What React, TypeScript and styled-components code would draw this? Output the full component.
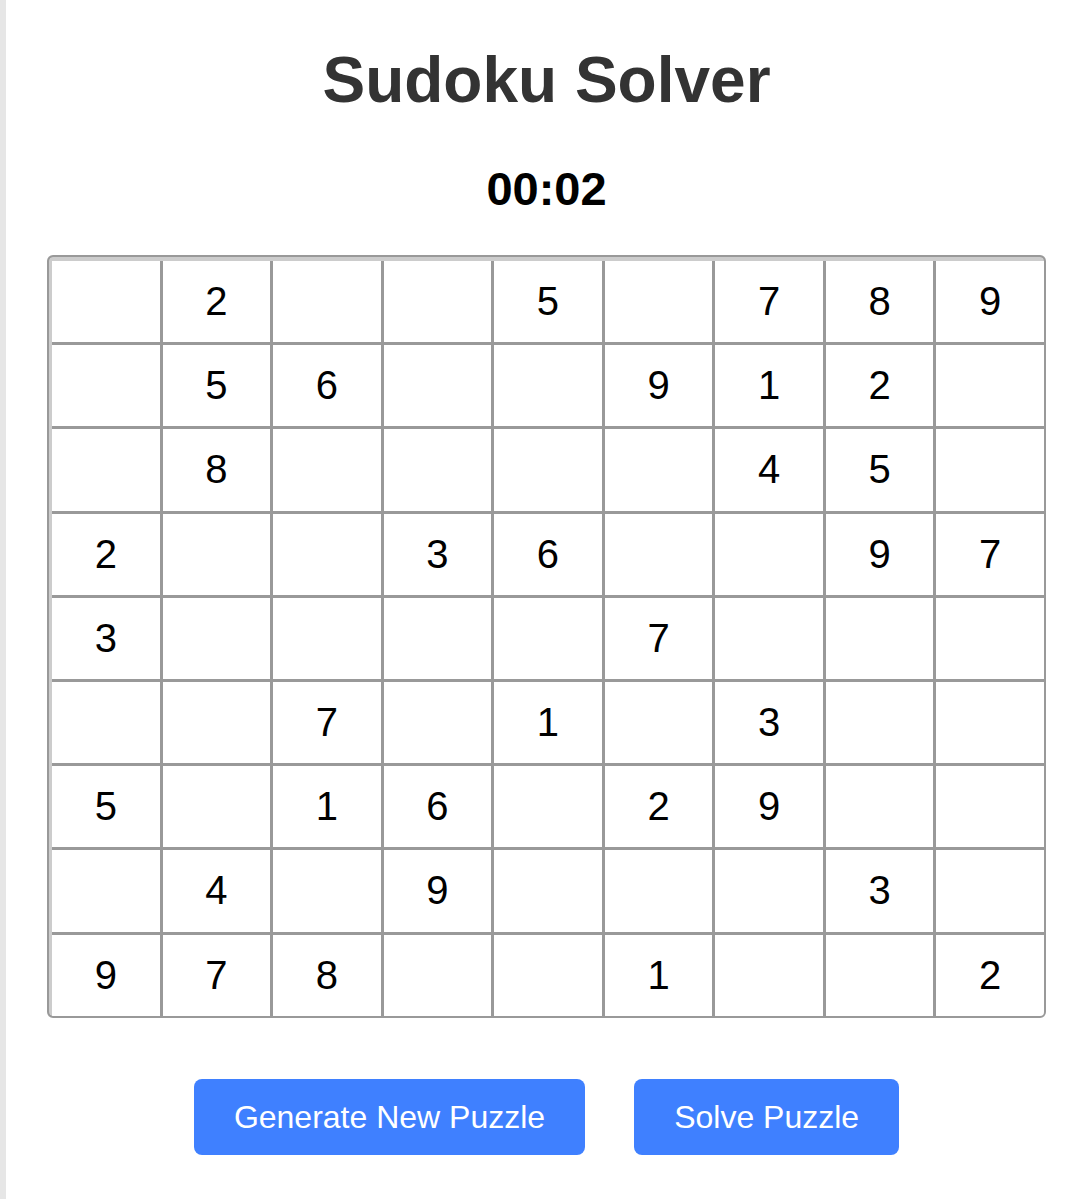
import React from "react";
import styled, { createGlobalStyle } from "styled-components";

const GlobalStyle = createGlobalStyle`
  html, body {
    margin: 0;
    padding: 0;
    background: #e6e6e6;
    font-family: "Liberation Sans", Arial, sans-serif;
  }
  * { box-sizing: border-box; }
`;

const Page = styled.div`
  margin-left: 6px;
  min-height: 100vh;
  background: #ffffff;
  padding: 43px 33px 40px 41px;
  display: flex;
  flex-direction: column;
  align-items: center;
`;

const Title = styled.h1`
  margin: 0;
  font-size: 64px;
  font-weight: 700;
  line-height: normal;
  color: #333333;
`;

const Timer = styled.div`
  margin-top: 44px;
  font-size: 47px;
  font-weight: 700;
  line-height: normal;
  color: #000000;
`;

const Board = styled.div`
  margin-top: 39px;
  width: 999px;
  display: grid;
  grid-template-columns: repeat(9, 1fr);
  grid-auto-rows: 81.2px;
  gap: 3px;
  background: #999999;
  border: 2px solid #999999;
  border-radius: 6px;
  padding: 4px 0 0 3px;
  box-shadow: inset 3px 4px 0 #cccccc;
  overflow: hidden;
`;

const Cell = styled.div`
  background: #ffffff;
  display: flex;
  align-items: center;
  justify-content: center;
  font-size: 40px;
  color: #000000;
`;

const Actions = styled.div`
  margin-top: 61px;
  display: flex;
  gap: 49px;
`;

const Button = styled.button`
  border: none;
  border-radius: 8px;
  background: #3f80ff;
  color: #ffffff;
  font-family: "Liberation Sans", Arial, sans-serif;
  font-size: 32px;
  line-height: 36px;
  padding: 20px 40px;
  cursor: pointer;
`;

const puzzle: number[][] = [
  [0, 2, 0, 0, 5, 0, 7, 8, 9],
  [0, 5, 6, 0, 0, 9, 1, 2, 0],
  [0, 8, 0, 0, 0, 0, 4, 5, 0],
  [2, 0, 0, 3, 6, 0, 0, 9, 7],
  [3, 0, 0, 0, 0, 7, 0, 0, 0],
  [0, 0, 7, 0, 1, 0, 3, 0, 0],
  [5, 0, 1, 6, 0, 2, 9, 0, 0],
  [0, 4, 0, 9, 0, 0, 0, 3, 0],
  [9, 7, 8, 0, 0, 1, 0, 0, 2],
];

export default function App() {
  return (
    <>
      <GlobalStyle />
      <Page>
        <Title>Sudoku Solver</Title>
        <Timer>00:02</Timer>
        <Board>
          {puzzle.flatMap((row, r) =>
            row.map((v, c) => <Cell key={`${r}-${c}`}>{v ? v : ""}</Cell>)
          )}
        </Board>
        <Actions>
          <Button>Generate New Puzzle</Button>
          <Button>Solve Puzzle</Button>
        </Actions>
      </Page>
    </>
  );
}
